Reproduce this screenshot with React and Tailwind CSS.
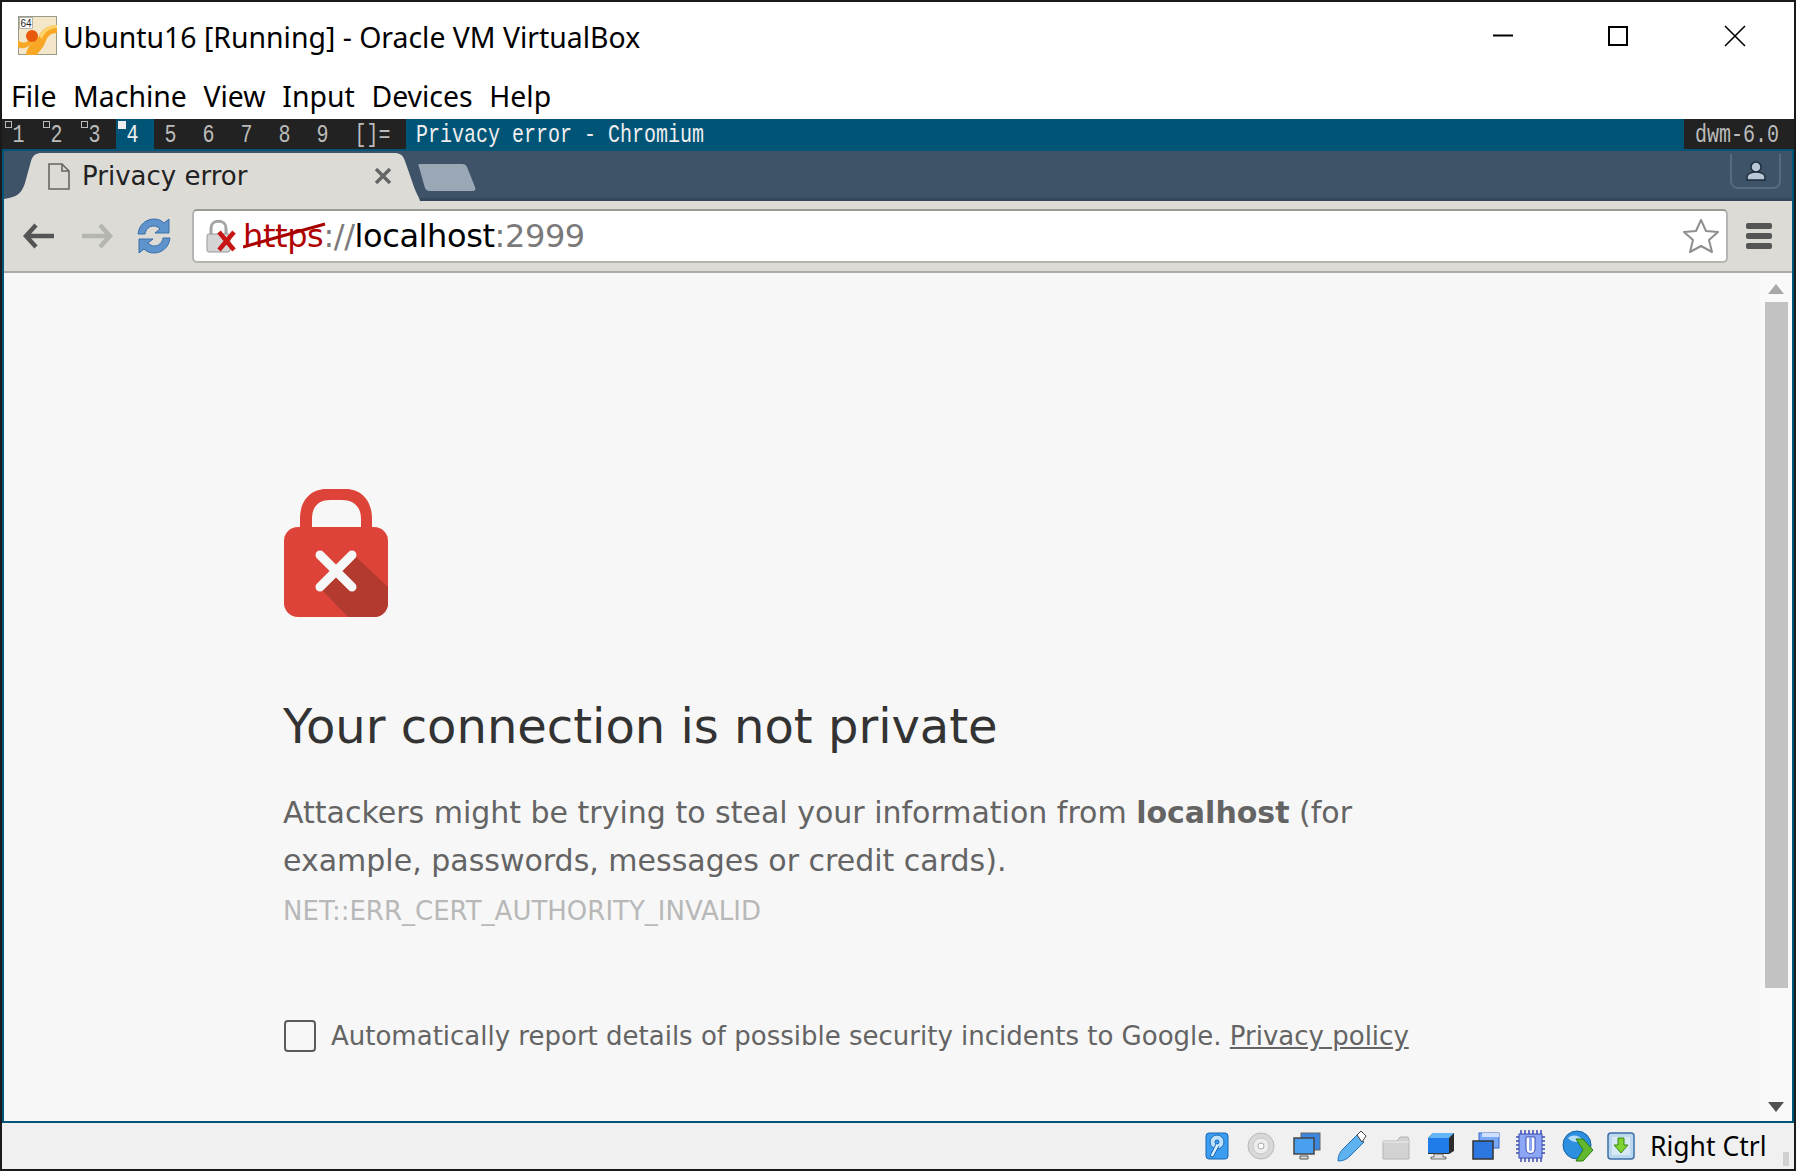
const winFont = { fontFamily: '"Noto Sans", "Open Sans", sans-serif' };

function VBoxLogo() {
  return (
    <svg width="40" height="40" viewBox="0 0 40 40" className="shrink-0">
      <rect x="0.5" y="0.5" width="38" height="38" fill="#f4e6c8" stroke="#9a9a8a" />
      <path d="M8 39 C10 26 18 26 21 20 C23 14 30 9 39 9 L39 17 C31 17 29 22 27 27 C24 34 20 36 19 39 Z" fill="#f9a825" />
      <path d="M21 20 C23 14 30 9 39 9 L39 12 C31 12 26 17 24 23 Z" fill="#ffd36b" />
      <path d="M0 24 C5 29 10 26 13 22 L16 25 C10 32 4 34 0 31 Z" fill="#f9a825" />
      <circle cx="14" cy="20" r="6" fill="#e8590c" />
      <rect x="1.5" y="1.5" width="13" height="11" fill="#fff" stroke="#888" strokeWidth="0.6" />
      <text x="8" y="11" textAnchor="middle" fontSize="10" fontFamily="Liberation Sans, sans-serif" fill="#222">64</text>
    </svg>
  );
}

function WindowButtons() {
  return (
    <div className="flex items-center ml-auto">
      <svg width="22" height="22" viewBox="0 0 22 22" className="mr-[93px]"><path d="M1 10.5h20" stroke="#000" strokeWidth="2" /></svg>
      <svg width="22" height="22" viewBox="0 0 22 22" className="mr-[95px]"><rect x="2" y="2" width="18" height="18" fill="none" stroke="#000" strokeWidth="2" /></svg>
      <svg width="22" height="22" viewBox="0 0 22 22" className="mr-[48px]"><path d="M1 1l20 20M21 1L1 21" stroke="#000" strokeWidth="1.6" /></svg>
    </div>
  );
}

function TagSquare({ filled }) {
  return filled
    ? <span className="absolute left-[2px] top-[2px] w-[8px] h-[8px] bg-[#eeeeee]" />
    : <span className="absolute left-[3px] top-[2px] w-[7px] h-[7px] border border-[#bbbbbb]" />;
}

function DwmBar() {
  const tags = ['1', '2', '3', '4', '5', '6', '7', '8', '9'];
  return (
    <div className="h-[30px] bg-[#005577] flex text-[20px] leading-[34px] text-[#bbbbbb]" style={{ fontFamily: '"Liberation Mono", monospace' }}>
      <div className="flex bg-[#222222]">
        {tags.map((t, i) => (
          <div key={t} className={`relative w-[38px] text-center pr-[5px] ${i === 3 ? 'bg-[#005577] text-[#eeeeee]' : ''}`}>
            {i < 4 && <TagSquare filled={i === 3} />}
            <span className="inline-block scale-y-[1.25]">{t}</span>
          </div>
        ))}
        <div className="w-[62px] text-center pr-[5px]"><span className="inline-block scale-y-[1.25]">[]=</span></div>
      </div>
      <div className="pl-[10px] text-[#eeeeee]"><span className="inline-block scale-y-[1.25]">Privacy error - Chromium</span></div>
      <div className="ml-auto w-[110px] bg-[#222222] text-center pr-[4px]"><span className="inline-block scale-y-[1.25]">dwm-6.0</span></div>
    </div>
  );
}

function TabStrip() {
  return (
    <div className="h-[50px] bg-[#3e5268] border-b-[3px] border-[#33465a] flex relative">
      <div className="relative w-[416px] h-[50px] shrink-0">
        <svg width="416" height="50" viewBox="0 0 416 50" className="absolute inset-0">
          <path d="M0 48 C12 46 17 44 21 32 L27 10 C29 4 32 2 38 2 L390 2 C396 2 399 4 401 10 L410 36 C413 44 415 46 416 50 L0 50 Z" fill="#dddbd6" />
        </svg>
        <div className="relative flex items-center h-[44px] pt-[6px]">
          <svg width="22" height="27" viewBox="0 0 22 27" className="ml-[44px]">
            <path d="M1 1h13l7 7v18H1z M14 1v7h7" fill="#dddbd6" stroke="#666" strokeWidth="1.6" />
          </svg>
          <span className="ml-[12px] text-[26px] leading-none text-[#222]" style={{ fontFamily: '"DejaVu Sans", sans-serif' }}>Privacy error</span>
          <svg width="18" height="18" viewBox="0 0 18 18" className="ml-auto mr-[28px]">
            <path d="M2 2l14 14M16 2L2 16" stroke="#666" strokeWidth="3.4" />
          </svg>
        </div>
      </div>
      <svg width="60" height="30" viewBox="0 0 60 30" className="mt-[12px] -ml-[2px]">
        <path d="M2 1h42c3 0 4 1 5 3l8 20c1 3 0 4-3 4H12c-3 0-4-1-5-3L1 4C0 2 0 1 2 1z" fill="#9aa8b5" />
      </svg>
      <div className="ml-auto mr-[11px] w-[51px] h-[35px] mt-[3px] rounded-b-[8px] border-x-2 border-b-2 border-[#566a80] flex items-center justify-center">
        <svg width="20" height="20" viewBox="0 0 20 20">
          <circle cx="10" cy="6" r="5" fill="#b9c6d6" stroke="#1c2c3c" strokeWidth="1.5" />
          <path d="M1 19v-3c0-3 4-5 9-5s9 2 9 5v3z" fill="#b9c6d6" stroke="#1c2c3c" strokeWidth="1.5" />
        </svg>
      </div>
    </div>
  );
}

function Toolbar() {
  return (
    <div className="h-[72px] bg-[#dddbd6] border-b-2 border-[#aaaaaa] flex items-center">
      <svg width="32" height="26" viewBox="0 0 32 26" className="ml-[19px]">
        <path d="M13 2L3 13l10 11M4 13h27" fill="none" stroke="#555" strokeWidth="4.5" />
      </svg>
      <svg width="32" height="26" viewBox="0 0 32 26" className="ml-[26px]">
        <path d="M19 2l10 11-10 11M28 13H1" fill="none" stroke="#b5b5b2" strokeWidth="4.5" />
      </svg>
      <svg width="34" height="36" viewBox="0 0 34 36" className="ml-[24px]">
        <path d="M1 16C2 6 10 1 17 1c5 0 8 2 10 4l5-4v14H18l5-4c-2-2-4-3-6-3-5 0-8 3-9 8z" fill="#5f93cc" stroke="#3a6ea8" />
        <path d="M33 20c-1 10-9 15-16 15-5 0-8-2-10-4l-5 4V21h14l-5 4c2 2 4 3 6 3 5 0 8-3 9-8z" fill="#5f93cc" stroke="#3a6ea8" />
      </svg>
      <div className="relative ml-[21px] w-[1536px] h-[54px] bg-white rounded-[5px] border-2 border-[#b4b4b0] border-t-[#9a9a96] flex items-center">
        <svg width="32" height="34" viewBox="0 0 32 34" className="ml-[12px] shrink-0">
          <path d="M5 15V9C5 0 20 0 20 9v6" fill="none" stroke="#a4a4a4" strokeWidth="3" />
          <rect x="1" y="15" width="23" height="18" rx="2" fill="#d4d4d4" stroke="#999" />
          <path d="M13 13l15 18M28 13L13 31" stroke="#c81414" strokeWidth="4.5" />
        </svg>
        <span className="ml-[5px] text-[32px] leading-none tracking-[-0.4px] text-[#7a7a7a]" style={{ fontFamily: '"DejaVu Sans", sans-serif' }}>
          <span className="text-[#b00000]">https</span>://<span className="text-black">localhost</span>:2999
        </span>
        <svg width="88" height="28" viewBox="0 0 88 28" className="absolute left-[49px] top-[10px]">
          <path d="M0 26L82 3" stroke="#a80000" strokeWidth="3" />
        </svg>
        <svg width="38" height="38" viewBox="0 0 38 38" className="ml-auto mr-[6px]">
          <path d="M19 3l5 11 12 1-9 8 3 12-11-6-11 6 3-12-9-8 12-1z" fill="#fff" stroke="#8e8e8e" strokeWidth="2" strokeLinejoin="round" />
        </svg>
      </div>
      <div className="ml-[18px] flex flex-col gap-[4px]">
        {[0, 1, 2].map(i => <div key={i} className="w-[26px] h-[6px] rounded-[2px] bg-[#555]" />)}
      </div>
    </div>
  );
}

function BigLock() {
  return (
    <svg width="104" height="128" viewBox="0 0 104 128">
      <path d="M16 40V30C16 8 30 0 42 0H62C74 0 88 8 88 30V40H77V30C77 16 68 11 58 11H46C36 11 28 16 28 30V40Z" fill="#dd4338" />
      <rect x="0" y="38" width="104" height="90" rx="14" fill="#dd4338" />
      <path d="M38 101L72 68L104 98V114C104 122 98 128 90 128H64Z" fill="#b23a2e" />
      <path d="M36 66L68 98M68 66L36 98" stroke="#f7f7f7" strokeWidth="9" strokeLinecap="round" />
    </svg>
  );
}

function ErrorPage() {
  return (
    <div className="flex-1 pl-[280px] pt-[216px]" style={{ fontFamily: '"DejaVu Sans", sans-serif' }}>
      <BigLock />
      <div className="-ml-px">
        <h1 className="mt-[79px] text-[48px] leading-[60px] text-[#333]">Your connection is not private</h1>
        <p className="mt-[33px] w-[1100px] text-[30px] leading-[48px] text-[#646464]">
          Attackers might be trying to steal your information from <b className="font-bold">localhost</b> (for example, passwords, messages or credit cards).
        </p>
        <div className="mt-[8px] text-[26px] leading-[36px] text-[#b8b8b8]">NET::ERR_CERT_AUTHORITY_INVALID</div>
      </div>
      <div className="mt-[91px] flex items-center">
        <div className="w-[32px] h-[32px] rounded-[4px] border-2 border-[#5a5a5a]" />
        <span className="ml-[15px] text-[26px] leading-[32px] text-[#646464]">
          Automatically report details of possible security incidents to Google. <span className="underline">Privacy policy</span>
        </span>
      </div>
    </div>
  );
}

function Scrollbar() {
  return (
    <div className="w-[32px] bg-[#f9f9f9] flex flex-col items-center pt-[11px] pb-[9px]">
      <svg width="16" height="10" viewBox="0 0 16 10"><path d="M8 0l8 10H0z" fill="#a8a8a8" /></svg>
      <div className="w-[23px] h-[686px] mt-[8px] bg-[#c2c2c2]" />
      <svg width="16" height="10" viewBox="0 0 16 10" className="mt-auto"><path d="M0 0h16L8 10z" fill="#505050" /></svg>
    </div>
  );
}

function StatusIcons() {
  return (
    <div className="flex items-center">
      {/* hard disk */}
      <svg width="24" height="28" viewBox="0 0 24 28">
        <rect x="1" y="1" width="22" height="26" rx="3" fill="#3c9df0" stroke="#1668b8" />
        <circle cx="12" cy="10" r="7" fill="#bfe0fa" stroke="#1668b8" />
        <circle cx="12" cy="10" r="2" fill="#3c9df0" stroke="#1668b8" />
        <path d="M11 12L5 24l3 1 6-11" fill="#dff0fd" stroke="#1668b8" />
      </svg>
      {/* optical disc */}
      <svg width="28" height="28" viewBox="0 0 28 28" className="ml-[18px]">
        <circle cx="14" cy="14" r="13" fill="#d8d8d8" stroke="#b8b8b8" />
        <circle cx="14" cy="14" r="8" fill="#ececec" stroke="#c8c8c8" />
        <circle cx="14" cy="14" r="3" fill="#fff" stroke="#aaa" />
      </svg>
      {/* network screens */}
      <svg width="28" height="28" viewBox="0 0 28 28" className="ml-[18px]">
        <rect x="8" y="1" width="19" height="17" fill="#3a86e0" stroke="#666" />
        <rect x="1" y="6" width="20" height="16" fill="#4aa0f0" stroke="#444" strokeWidth="1.5" />
        <path d="M7 24h8v3H7z" fill="#ddd" stroke="#555" />
      </svg>
      {/* usb */}
      <svg width="30" height="32" viewBox="0 0 30 32" className="ml-[16px]">
        <path d="M20 5L6 19C2 23 1 27 1 31c4 0 8-1 12-5L27 12z" fill="#5fb2f0" stroke="#1f70b8" />
        <path d="M20 5l4-4 5 5-4 6z" fill="#fff" stroke="#444" />
      </svg>
      {/* shared folder */}
      <svg width="28" height="24" viewBox="0 0 28 24" className="ml-[15px] mt-[4px]">
        <path d="M1 5h14l3-4h8l1 3v19H1z" fill="#d2d2d2" stroke="#b4b4b4" />
        <path d="M1 6h26" stroke="#eee" />
      </svg>
      {/* display */}
      <svg width="28" height="28" viewBox="0 0 28 28" className="ml-[17px]">
        <path d="M1 6l5-5h21v18l-5 3H1z" fill="#2c2c2c" />
        <path d="M1 6l5-5h21l-5 5z" fill="#64b4f8" />
        <rect x="1" y="6" width="21" height="15" fill="#1f7ce8" />
        <path d="M7 22h9v3h3v2H4v-2h3z" fill="#ddd" stroke="#555" strokeWidth="0.8" />
      </svg>
      {/* seamless */}
      <svg width="28" height="28" viewBox="0 0 28 28" className="ml-[17px]">
        <rect x="7" y="1" width="20" height="15" fill="#7aa8f8" stroke="#3a66c8" />
        <rect x="10" y="1" width="17" height="4" fill="#cfe0ff" />
        <rect x="1" y="9" width="20" height="18" fill="#2c78e0" stroke="#333" strokeWidth="1.5" />
      </svg>
      {/* cpu */}
      <svg width="31" height="32" viewBox="0 0 31 32" className="ml-[15px]">
        <path d="M6 0v32M10 0v32M14 0v32M18 0v32M22 0v32M26 0v32M1 7h29M1 11h29M1 15h29M1 19h29M1 23h29" stroke="#3a4cb0" strokeWidth="1.5" />
        <rect x="4" y="4" width="23" height="24" fill="#8ca6f6" stroke="#3a4cb0" />
        <path d="M11 7h9v12c0 6-9 6-9 0z" fill="#fff" stroke="#3a4cb0" />
        <path d="M14 8h3v11c0 3-3 3-3 0z" fill="#8ca6f6" />
      </svg>
      {/* guest additions / network arrow */}
      <svg width="31" height="32" viewBox="0 0 31 32" className="ml-[16px]">
        <circle cx="15" cy="15" r="14" fill="#2d8fe0" stroke="#16609f" />
        <path d="M6 8c4-4 12-3 14 2-3 3-10 3-14-2z" fill="#b5dcf8" />
        <path d="M14 9h7l10 11-10 11h-7l7-11z" fill="#62b82e" stroke="#2e7a10" />
      </svg>
      {/* download */}
      <svg width="28" height="28" viewBox="0 0 28 28" className="ml-[14px]">
        <rect x="1" y="1" width="26" height="26" rx="3" fill="#bcd8ee" stroke="#3b6ea8" strokeWidth="1.5" />
        <rect x="5" y="5" width="18" height="18" fill="#d8e8f4" />
        <path d="M11 6h6v7h4l-7 8-7-8h4z" fill="#7fd232" stroke="#3b8a10" />
      </svg>
    </div>
  );
}

export default function App() {
  return (
    <div className="w-[1796px] h-[1171px] bg-white border-2 border-[#1a1a1a] flex flex-col overflow-hidden">
      {/* VirtualBox title bar */}
      <div className="h-[62px] shrink-0 flex items-center text-[28.4px] text-black pl-[16px] pt-[5px]" style={winFont}>
        <VBoxLogo />
        <span className="ml-[5px] mt-[4px] leading-none">Ubuntu16 [Running] - Oracle VM VirtualBox</span>
        <WindowButtons />
      </div>
      <div className="h-[55px] shrink-0 flex items-center gap-[16.7px] pl-[9px] pt-[10px] text-[28.4px] text-black" style={winFont}>
        {['File', 'Machine', 'View', 'Input', 'Devices', 'Help'].map(m => <span key={m}>{m}</span>)}
      </div>

      <DwmBar />

      {/* Guest window */}
      <div className="flex-1 min-h-0 flex flex-col border-2 border-[#005577]">
        <TabStrip />
        <Toolbar />
        <div className="flex-1 min-h-0 flex bg-[#f7f7f7]">
          <ErrorPage />
          <Scrollbar />
        </div>
      </div>

      {/* VirtualBox status bar */}
      <div className="h-[46px] shrink-0 bg-[#f0f0f0] flex items-center pl-[1203px]">
        <StatusIcons />
        <span className="ml-[15px] text-[26.5px] leading-none text-black" style={winFont}>Right Ctrl</span>
        <div className="ml-auto mr-[5px] self-end mb-[3px] w-[6px] h-[14px] bg-[#d0d0d0]" />
      </div>
    </div>
  );
}
